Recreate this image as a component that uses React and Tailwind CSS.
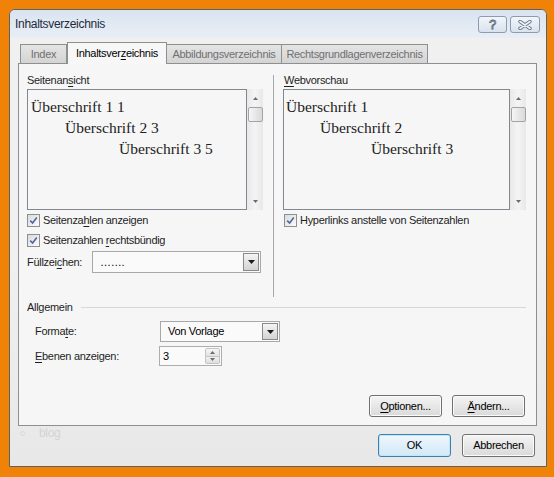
import React from 'react';

function Key({ children }) {
  return <span className="underline decoration-1 underline-offset-[2px]">{children}</span>;
}

function Tri({ up = false, small = false }) {
  const w = small ? 5 : 7;
  const h = small ? 3 : 4;
  return (
    <svg width={w} height={h} viewBox={`0 0 ${w} ${h}`}>
      <path d={up ? `M0 ${h} H${w} L${w / 2} 0 Z` : `M0 0 H${w} L${w / 2} ${h} Z`} fill={small ? '#6b6b6b' : '#1a1a1a'} />
    </svg>
  );
}

function CheckBox() {
  return (
    <span className="flex h-[13px] w-[13px] shrink-0 items-center justify-center border border-[#8e8f8f] bg-gradient-to-br from-[#dadbdc] to-[#fbfbfb]">
      <svg width="9" height="9" viewBox="0 0 9 9">
        <path d="M1.2 4.6 L3.6 7 L7.8 1.4" stroke="#5068a0" strokeWidth="1.6" fill="none" />
      </svg>
    </span>
  );
}

function ScrollBar() {
  return (
    <div className="flex w-[16px] flex-col items-center bg-gradient-to-r from-[#e8e8e8] via-[#f4f4f4] to-[#e8e8e8]">
      <div className="flex h-[18px] items-center justify-center">
        <Tri up small />
      </div>
      <div className="h-[15px] w-[15px] rounded-[2px] border border-[#a3a3a3] bg-gradient-to-r from-[#f6f6f6] to-[#d9d9d9]" />
      <div className="flex-1" />
      <div className="flex h-[17px] items-center justify-center">
        <Tri small />
      </div>
    </div>
  );
}

function Combo({ text, className }) {
  return (
    <div className={`flex border border-[#a8a8a8] bg-[#fafafa] ${className}`}>
      <div className="flex flex-1 items-center pl-[7px] text-black">{text}</div>
      <div className="m-[1px] flex w-[16px] items-center justify-center border border-[#8a8a8a] bg-gradient-to-b from-[#f4f4f4] to-[#d3d3d3]">
        <Tri />
      </div>
    </div>
  );
}

function Spinner() {
  return (
    <div className="flex h-[20px] w-[63px] border border-[#abadb3] bg-[#fafafa]">
      <div className="flex flex-1 items-center pl-[3px] text-black">3</div>
      <div className="m-[1px] flex w-[15px] flex-col">
        <div className="flex flex-1 items-center justify-center rounded-t-[2px] border border-[#c3c3c3] bg-gradient-to-b from-[#f5f5f5] to-[#e3e3e3]">
          <Tri up small />
        </div>
        <div className="flex flex-1 items-center justify-center rounded-b-[2px] border border-t-0 border-[#c3c3c3] bg-gradient-to-b from-[#f0f0f0] to-[#dedede]">
          <Tri small />
        </div>
      </div>
    </div>
  );
}

function Btn({ children, primary = false, h = 'h-[22px]' }) {
  const look = primary
    ? 'border-[#3c7fb1] bg-gradient-to-b from-[#eef7fd] to-[#d2e8f6] shadow-[inset_0_0_0_1px_#c4e5f8]'
    : 'border-[#707070] bg-gradient-to-b from-[#f4f4f4] to-[#dadada] shadow-[inset_0_0_0_1px_#fbfbfb]';
  return (
    <div className={`flex w-[73px] items-center justify-center rounded-[3px] border text-black ${h} ${look}`}>
      {children}
    </div>
  );
}

function Preview({ lines, width }) {
  return (
    <div className="flex h-[121px]">
      <div className={`border border-[#828790] bg-[#f6f6f6] pt-[6px] font-['Liberation_Serif','Times_New_Roman',serif] text-[15.5px] leading-[21px] tracking-normal text-[#222222] ${width}`}>
        {lines.map(([text, pad]) => (
          <div key={text} className={pad}>
            {text}
          </div>
        ))}
      </div>
      <ScrollBar />
    </div>
  );
}

export default function App() {
  return (
    <div className="h-[477px] w-[554px] bg-[#f08307] pl-[9px] pt-[9px] font-['Liberation_Sans',Arial,sans-serif] text-[11px] tracking-[-0.3px] text-[#1e1e1e]">
      <div className="relative flex h-[458px] w-[538px] flex-col overflow-hidden rounded-t-[6px] border border-[#5b6168] bg-[#f0f0f0]">
        {/* title bar */}
        <div className="flex h-[28px] items-start bg-gradient-to-b from-[#d9e4f1] to-[#e9eef5] pl-[5px] pr-[6px]">
          <div className="flex h-[28px] flex-1 items-center text-[12px] text-[#1f2a3a]">Inhaltsverzeichnis</div>
          <div className="mt-[6px] flex gap-[3px]">
            <div className="flex h-[17px] w-[29px] items-center justify-center rounded-[3px] border border-[#8c9bb0] bg-gradient-to-b from-[#f3f6fa] to-[#d9e2ed] text-[13px] leading-none text-[#eef2f7] [-webkit-text-stroke:0.8px_#5d6a7c]">
              ?
            </div>
            <div className="flex h-[17px] w-[30px] items-center justify-center rounded-[3px] border border-[#8c9bb0] bg-gradient-to-b from-[#f3f6fa] to-[#d9e2ed]">
              <svg width="14" height="10" viewBox="0 0 14 10">
                <path d="M2 1.5 L12 8.5 M12 1.5 L2 8.5" stroke="#6a778a" strokeWidth="3.4" strokeLinecap="round" />
                <path d="M2 1.5 L12 8.5 M12 1.5 L2 8.5" stroke="#eef2f7" strokeWidth="1.6" strokeLinecap="round" />
              </svg>
            </div>
          </div>
        </div>

        {/* client */}
        <div className="flex flex-1 flex-col bg-gradient-to-b from-[#f0f0f0] via-[#f0f0f0] to-[#e8e8e8] pl-[8px] pr-[8px] pt-[4px]">
          {/* tabs */}
          <div className="flex h-[21px] items-end pl-[2px]">
            <div className="flex h-[19px] w-[47px] items-center justify-center border border-b-0 border-[#8e8f8f] bg-gradient-to-b from-[#e4e4e4] to-[#d4d4d4] text-[#707070]">
              Index
            </div>
            <div className="relative z-10 -mb-[1px] flex h-[22px] w-[100px] items-center justify-center border border-b-0 border-[#8e8f8f] bg-[#f7f7f7] pb-[1px] text-black">
              Inhaltsver<Key>z</Key>eichnis
            </div>
            <div className="flex h-[19px] w-[115px] items-center justify-center border border-b-0 border-l-0 border-[#8e8f8f] bg-gradient-to-b from-[#e4e4e4] to-[#d4d4d4] text-[#707070]">
              Abbildungsverzeichnis
            </div>
            <div className="flex h-[19px] w-[146px] items-center justify-center border border-b-0 border-l-0 border-[#8e8f8f] bg-gradient-to-b from-[#e4e4e4] to-[#d4d4d4] text-[#707070]">
              Rechtsgrundlagenverzeichnis
            </div>
          </div>

          {/* panel */}
          <div className="flex h-[363px] w-[519px] flex-col border border-[#8e8f8f] bg-[#f6f6f6] pl-[8px] pr-[10px] pt-[9px]">
            <div className="flex h-[224px]">
              {/* left column */}
              <div className="flex w-[236px] flex-col">
                <div className="h-[15px] leading-[15px]">
                  Seitenan<Key>s</Key>icht
                </div>
                <div className="mt-[1px]">
                  <Preview
                    width="w-[220px]"
                    lines={[
                      ['Überschrift 1 1', 'pl-[3px]'],
                      ['Überschrift 2 3', 'pl-[37px]'],
                      ['Überschrift 3 5', 'pl-[91px]'],
                    ]}
                  />
                </div>
                <div className="mt-[3px] flex h-[15px] items-center gap-[3px]">
                  <CheckBox />
                  <span>
                    Seitenza<Key>h</Key>len anzeigen
                  </span>
                </div>
                <div className="mt-[5px] flex h-[15px] items-center gap-[3px]">
                  <CheckBox />
                  <span>
                    Seitenzahlen <Key>r</Key>echtsbündig
                  </span>
                </div>
                <div className="mt-[3px] flex h-[22px] items-center">
                  <span className="w-[65px]">
                    Füllzei<Key>c</Key>hen:
                  </span>
                  <Combo text="……." className="h-[22px] w-[169px]" />
                </div>
              </div>

              {/* divider */}
              <div className="ml-[10px] mt-[2px] w-[1px] bg-[#a9a9a9]" />

              {/* right column */}
              <div className="ml-[9px] flex w-[243px] flex-col">
                <div className="h-[15px] pl-[1px] leading-[15px]">
                  <Key>W</Key>ebvorschau
                </div>
                <div className="mt-[1px]">
                  <Preview
                    width="w-[227px]"
                    lines={[
                      ['Überschrift 1', 'pl-[2px]'],
                      ['Überschrift 2', 'pl-[36px]'],
                      ['Überschrift 3', 'pl-[87px]'],
                    ]}
                  />
                </div>
                <div className="mt-[3px] flex h-[15px] items-center gap-[3px] pl-[1px]">
                  <CheckBox />
                  <span>Hyperlinks anstelle von Seitenzahlen</span>
                </div>
              </div>
            </div>

            {/* Allgemein */}
            <div className="mt-[3px] flex h-[15px] items-center">
              <span>Allgemein</span>
              <div className="ml-[8px] h-[1px] flex-1 bg-[#d8d8d8]" />
            </div>
            <div className="mt-[6px] flex h-[21px] items-center pl-[8px]">
              <span className="w-[125px]">
                Forma<Key>t</Key>e:
              </span>
              <Combo text="Von Vorlage" className="h-[21px] w-[120px]" />
            </div>
            <div className="mt-[4px] flex h-[20px] items-center pl-[8px]">
              <span className="w-[124px]">
                <Key>E</Key>benen anzeigen:
              </span>
              <Spinner />
            </div>

            <div className="mt-auto flex justify-end gap-[10px] pb-[8px] pr-[1px]">
              <Btn>
                <Key>O</Key>ptionen...
              </Btn>
              <Btn>
                <Key>Ä</Key>ndern...
              </Btn>
            </div>
          </div>

          {/* dialog buttons */}
          <div className="relative mt-[8px] flex w-[519px] justify-end gap-[11px] pr-[2px]">
            <div className="absolute left-[2px] top-[-10px] flex items-center gap-[14px] text-[#d4d4d4]">
              <span className="h-[5px] w-[5px] rounded-full border border-[#dadada]" />
              <span className="text-[12px]">blog</span>
            </div>
            <Btn primary h="h-[23px]">OK</Btn>
            <Btn h="h-[23px]">Abbrechen</Btn>
          </div>
        </div>
      </div>
    </div>
  );
}
